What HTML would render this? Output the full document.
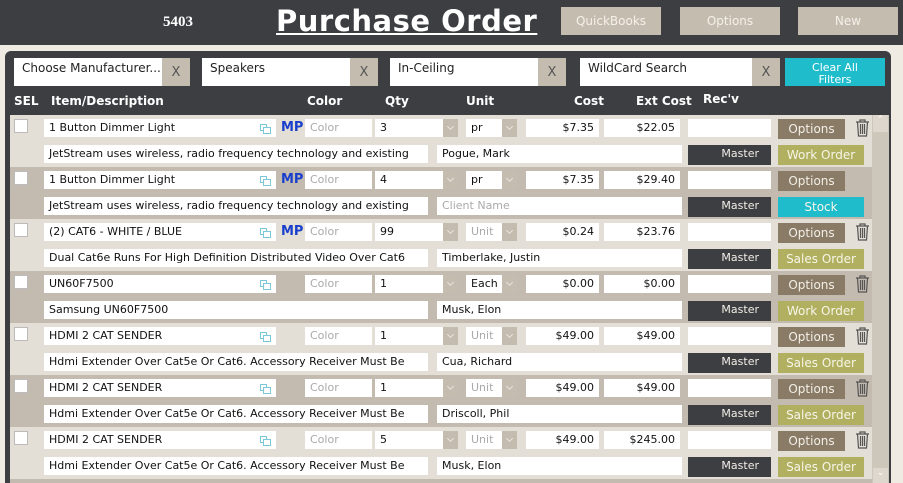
<!DOCTYPE html>
<html style="width:903px;height:483px;overflow:hidden"><head><meta charset="utf-8"><style>
*{box-sizing:border-box;margin:0;padding:0}
body{width:903px;height:483px;overflow:hidden;background:#efebe3;font-family:"DejaVu Sans","Liberation Sans",sans-serif;position:relative}
.a{position:absolute}
#top{left:0;top:0;width:903px;height:45px;background:#3d3e42}
.hb{background:#c4bcaf;color:#f4f1ea;font-size:12px;text-align:center;line-height:28px;top:7px;width:100px;height:28px}
#panel{left:5px;top:51px;width:886px;height:432px;background:#3d3e42;border-radius:6px 6px 0 0}
.f{background:#fff;height:28px;top:58px;font-size:12px;color:#222;padding:3px 0 0 8px}
.x{background:#c4bcaf;height:28px;top:58px;width:28px;color:#555;font-size:13px;text-align:center;line-height:30px}
.h{top:94px;color:#fff;font-weight:bold;font-size:12px}
.row{left:10px;width:862px;height:52px}
.l{background:#e3ded6}.d{background:#c3bbb0}
.in{background:#fff;height:18px;font-size:11px;line-height:18px;padding-left:5px;color:#111;white-space:nowrap;overflow:hidden}
.ph{color:#aaa}
.dd{background:#c4bcaf;width:15px;height:18px}
.dd:after{content:"";position:absolute;left:5px;top:5px;width:4px;height:4px;border-right:1px solid #e8e4dc;border-bottom:1px solid #e8e4dc;transform:rotate(45deg)}
.r{text-align:right;padding-right:5px}
.mp{color:#1a3fcc;font-weight:bold;font-size:13px;line-height:18px}
.cb{width:14px;height:14px;background:#fff;border:1px solid #bbb}
.ob{background:#8a7b67;color:#f3efe7;font-size:12px;text-align:center;line-height:20px;width:67px;height:20px}
.ms{background:#3d3e42;color:#f3efe7;font-size:11px;text-align:right;padding-right:12px;line-height:18px;width:83px;height:20px}
.wo{background:#b1b060;color:#f7f5e8;font-size:12px;text-align:center;line-height:20px;width:86px;height:20px}
.st{background:#1fbccc}
</style></head><body>
<div id="top" class="a"></div>
<div class="a" style="left:163px;top:14px;color:#fff;font-weight:bold;font-size:15px;font-family:'Liberation Serif',serif">5403</div>
<div class="a" style="left:276px;top:4px;color:#fff;font-weight:bold;font-size:29px;text-decoration:underline;letter-spacing:0.5px">Purchase Order</div>
<div class="a hb" style="left:561px">QuickBooks</div>
<div class="a hb" style="left:680px">Options</div>
<div class="a hb" style="left:798px">New</div>
<div id="panel" class="a"></div>
<div class="a f" style="left:14px;width:148px">Choose Manufacturer...</div><div class="a x" style="left:162px">X</div>
<div class="a f" style="left:202px;width:148px">Speakers</div><div class="a x" style="left:350px">X</div>
<div class="a f" style="left:390px;width:148px">In-Ceiling</div><div class="a x" style="left:538px">X</div>
<div class="a f" style="left:580px;width:172px">WildCard Search</div><div class="a x" style="left:752px">X</div>
<div class="a" style="left:785px;top:58px;width:100px;height:28px;background:#1fbccc;color:#fff;font-size:11px;text-align:center;line-height:12px;padding-top:4px">Clear All<br>Filters</div>
<div class="a h" style="left:14px">SEL</div>
<div class="a h" style="left:51px">Item/Description</div>
<div class="a h" style="left:307px">Color</div>
<div class="a h" style="left:385px">Qty</div>
<div class="a h" style="left:466px">Unit</div>
<div class="a h" style="left:574px">Cost</div>
<div class="a h" style="left:636px">Ext Cost</div>
<div class="a h" style="left:703px;top:92px">Rec'v</div>
<div class="a" style="left:872px;top:115px;width:17px;height:368px;background:#cdc6bb"></div>
<div class="a" style="left:873px;top:115px;width:15px;height:17px;background:#ddd7ce;color:#fff;font-size:9px;text-align:center">&#8963;</div>
<div class="a" style="left:873px;top:468px;width:15px;height:15px;background:#ddd7ce;color:#fff;font-size:9px;text-align:center">&#8964;</div>

<div class="a row l" style="top:115px"></div>
<div class="a row d" style="top:167px"></div>
<div class="a row l" style="top:219px"></div>
<div class="a row d" style="top:271px"></div>
<div class="a row l" style="top:323px"></div>
<div class="a row d" style="top:375px"></div>
<div class="a row l" style="top:427px"></div>
<div class="a row d" style="top:479px;height:4px"></div>

<svg width="0" height="0" style="position:absolute"><defs>
<g id="cp"><rect x="0.5" y="0.5" width="6" height="6" fill="none" stroke="#7cc8d8"/><rect x="3.5" y="3.5" width="7" height="6" fill="#fff" stroke="#7cc8d8"/></g>
<g id="tr"><path d="M1 3h13M5 3V1h5v2M2.5 3l1 14h8l1-14M5.5 5v10M7.5 5v10M9.5 5v10" fill="none" stroke="#555" stroke-width="1.2"/></g>
</defs></svg>

<div class="a cb" style="left:14px;top:119px"></div>
<div class="a in" style="left:44px;top:119px;width:232px">1 Button Dimmer Light</div>
<svg class="a" style="left:260px;top:124px" width="12" height="11"><use href="#cp"/></svg>
<div class="a mp" style="left:281px;top:119px">MP</div>
<div class="a in ph" style="left:305px;top:119px;width:67px">Color</div>
<div class="a in" style="left:375px;top:119px;width:68px">3</div><div class="a dd" style="left:443px;top:119px"></div>
<div class="a in" style="left:466px;top:119px;width:36px">pr</div><div class="a dd" style="left:502px;top:119px"></div>
<div class="a in r" style="left:526px;top:119px;width:73px">$7.35</div>
<div class="a in r" style="left:604px;top:119px;width:76px">$22.05</div>
<div class="a in" style="left:688px;top:119px;width:83px"></div>
<div class="a ob" style="left:778px;top:119px">Options</div>
<svg class="a" style="left:855px;top:119px" width="15" height="18"><use href="#tr"/></svg>
<div class="a in" style="left:44px;top:145px;width:384px">JetStream uses wireless, radio frequency technology and existing</div>
<div class="a in" style="left:437px;top:145px;width:245px">Pogue, Mark</div>
<div class="a ms" style="left:688px;top:145px">Master</div>
<div class="a wo" style="left:778px;top:145px">Work Order</div>

<div class="a cb" style="left:14px;top:171px"></div>
<div class="a in" style="left:44px;top:171px;width:232px">1 Button Dimmer Light</div>
<svg class="a" style="left:260px;top:176px" width="12" height="11"><use href="#cp"/></svg>
<div class="a mp" style="left:281px;top:171px">MP</div>
<div class="a in ph" style="left:305px;top:171px;width:67px">Color</div>
<div class="a in" style="left:375px;top:171px;width:68px">4</div><div class="a dd" style="left:443px;top:171px"></div>
<div class="a in" style="left:466px;top:171px;width:36px">pr</div><div class="a dd" style="left:502px;top:171px"></div>
<div class="a in r" style="left:526px;top:171px;width:73px">$7.35</div>
<div class="a in r" style="left:604px;top:171px;width:76px">$29.40</div>
<div class="a in" style="left:688px;top:171px;width:83px"></div>
<div class="a ob" style="left:778px;top:171px">Options</div>
<div class="a in" style="left:44px;top:197px;width:384px">JetStream uses wireless, radio frequency technology and existing</div>
<div class="a in ph" style="left:437px;top:197px;width:245px">Client Name</div>
<div class="a ms" style="left:688px;top:197px">Master</div>
<div class="a wo st" style="left:778px;top:197px">Stock</div>

<div class="a cb" style="left:14px;top:223px"></div>
<div class="a in" style="left:44px;top:223px;width:232px">(2) CAT6 - WHITE / BLUE</div>
<svg class="a" style="left:260px;top:228px" width="12" height="11"><use href="#cp"/></svg>
<div class="a mp" style="left:281px;top:223px">MP</div>
<div class="a in ph" style="left:305px;top:223px;width:67px">Color</div>
<div class="a in" style="left:375px;top:223px;width:68px">99</div><div class="a dd" style="left:443px;top:223px"></div>
<div class="a in ph" style="left:466px;top:223px;width:36px">Unit</div><div class="a dd" style="left:502px;top:223px"></div>
<div class="a in r" style="left:526px;top:223px;width:73px">$0.24</div>
<div class="a in r" style="left:604px;top:223px;width:76px">$23.76</div>
<div class="a in" style="left:688px;top:223px;width:83px"></div>
<div class="a ob" style="left:778px;top:223px">Options</div>
<svg class="a" style="left:855px;top:223px" width="15" height="18"><use href="#tr"/></svg>
<div class="a in" style="left:44px;top:249px;width:384px">Dual Cat6e Runs For High Definition Distributed Video Over Cat6</div>
<div class="a in" style="left:437px;top:249px;width:245px">Timberlake, Justin</div>
<div class="a ms" style="left:688px;top:249px">Master</div>
<div class="a wo" style="left:778px;top:249px">Sales Order</div>

<div class="a cb" style="left:14px;top:275px"></div>
<div class="a in" style="left:44px;top:275px;width:232px">UN60F7500</div>
<svg class="a" style="left:260px;top:280px" width="12" height="11"><use href="#cp"/></svg>
<div class="a in ph" style="left:305px;top:275px;width:67px">Color</div>
<div class="a in" style="left:375px;top:275px;width:68px">1</div><div class="a dd" style="left:443px;top:275px"></div>
<div class="a in" style="left:466px;top:275px;width:36px">Each</div><div class="a dd" style="left:502px;top:275px"></div>
<div class="a in r" style="left:526px;top:275px;width:73px">$0.00</div>
<div class="a in r" style="left:604px;top:275px;width:76px">$0.00</div>
<div class="a in" style="left:688px;top:275px;width:83px"></div>
<div class="a ob" style="left:778px;top:275px">Options</div>
<svg class="a" style="left:855px;top:275px" width="15" height="18"><use href="#tr"/></svg>
<div class="a in" style="left:44px;top:301px;width:384px">Samsung UN60F7500</div>
<div class="a in" style="left:437px;top:301px;width:245px">Musk, Elon</div>
<div class="a ms" style="left:688px;top:301px">Master</div>
<div class="a wo" style="left:778px;top:301px">Work Order</div>

<div class="a cb" style="left:14px;top:327px"></div>
<div class="a in" style="left:44px;top:327px;width:232px">HDMI 2 CAT SENDER</div>
<svg class="a" style="left:260px;top:332px" width="12" height="11"><use href="#cp"/></svg>
<div class="a in ph" style="left:305px;top:327px;width:67px">Color</div>
<div class="a in" style="left:375px;top:327px;width:68px">1</div><div class="a dd" style="left:443px;top:327px"></div>
<div class="a in ph" style="left:466px;top:327px;width:36px">Unit</div><div class="a dd" style="left:502px;top:327px"></div>
<div class="a in r" style="left:526px;top:327px;width:73px">$49.00</div>
<div class="a in r" style="left:604px;top:327px;width:76px">$49.00</div>
<div class="a in" style="left:688px;top:327px;width:83px"></div>
<div class="a ob" style="left:778px;top:327px">Options</div>
<svg class="a" style="left:855px;top:327px" width="15" height="18"><use href="#tr"/></svg>
<div class="a in" style="left:44px;top:353px;width:384px">Hdmi Extender Over Cat5e Or Cat6. Accessory Receiver Must Be</div>
<div class="a in" style="left:437px;top:353px;width:245px">Cua, Richard</div>
<div class="a ms" style="left:688px;top:353px">Master</div>
<div class="a wo" style="left:778px;top:353px">Sales Order</div>

<div class="a cb" style="left:14px;top:379px"></div>
<div class="a in" style="left:44px;top:379px;width:232px">HDMI 2 CAT SENDER</div>
<svg class="a" style="left:260px;top:384px" width="12" height="11"><use href="#cp"/></svg>
<div class="a in ph" style="left:305px;top:379px;width:67px">Color</div>
<div class="a in" style="left:375px;top:379px;width:68px">1</div><div class="a dd" style="left:443px;top:379px"></div>
<div class="a in ph" style="left:466px;top:379px;width:36px">Unit</div><div class="a dd" style="left:502px;top:379px"></div>
<div class="a in r" style="left:526px;top:379px;width:73px">$49.00</div>
<div class="a in r" style="left:604px;top:379px;width:76px">$49.00</div>
<div class="a in" style="left:688px;top:379px;width:83px"></div>
<div class="a ob" style="left:778px;top:379px">Options</div>
<svg class="a" style="left:855px;top:379px" width="15" height="18"><use href="#tr"/></svg>
<div class="a in" style="left:44px;top:405px;width:384px">Hdmi Extender Over Cat5e Or Cat6. Accessory Receiver Must Be</div>
<div class="a in" style="left:437px;top:405px;width:245px">Driscoll, Phil</div>
<div class="a ms" style="left:688px;top:405px">Master</div>
<div class="a wo" style="left:778px;top:405px">Sales Order</div>

<div class="a cb" style="left:14px;top:431px"></div>
<div class="a in" style="left:44px;top:431px;width:232px">HDMI 2 CAT SENDER</div>
<svg class="a" style="left:260px;top:436px" width="12" height="11"><use href="#cp"/></svg>
<div class="a in ph" style="left:305px;top:431px;width:67px">Color</div>
<div class="a in" style="left:375px;top:431px;width:68px">5</div><div class="a dd" style="left:443px;top:431px"></div>
<div class="a in ph" style="left:466px;top:431px;width:36px">Unit</div><div class="a dd" style="left:502px;top:431px"></div>
<div class="a in r" style="left:526px;top:431px;width:73px">$49.00</div>
<div class="a in r" style="left:604px;top:431px;width:76px">$245.00</div>
<div class="a in" style="left:688px;top:431px;width:83px"></div>
<div class="a ob" style="left:778px;top:431px">Options</div>
<svg class="a" style="left:855px;top:431px" width="15" height="18"><use href="#tr"/></svg>
<div class="a in" style="left:44px;top:457px;width:384px">Hdmi Extender Over Cat5e Or Cat6. Accessory Receiver Must Be</div>
<div class="a in" style="left:437px;top:457px;width:245px">Musk, Elon</div>
<div class="a ms" style="left:688px;top:457px">Master</div>
<div class="a wo" style="left:778px;top:457px">Sales Order</div>
</body></html>
